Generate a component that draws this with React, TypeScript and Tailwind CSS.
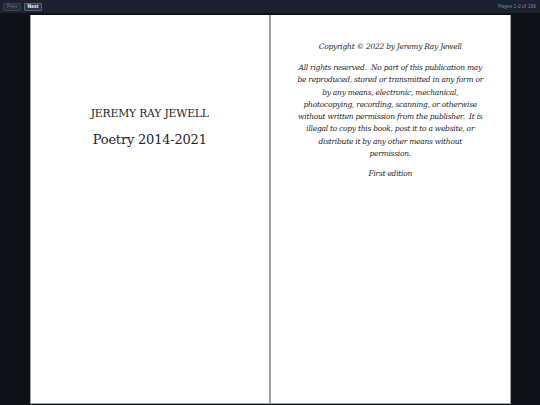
export default function App() {
  const serif = { fontFamily: '"DejaVu Serif", "Liberation Serif", serif' };
  const lines = [
    "All rights reserved.\u00a0 No part of this publication may",
    "be reproduced, stored or transmitted in any form or",
    "by any means, electronic, mechanical,",
    "photocopying, recording, scanning, or otherwise",
    "without written permission from the publisher.\u00a0 It is",
    "illegal to copy this book, post it to a website, or",
    "distribute it by any other means without",
    "permission.",
  ];
  return (
    <div className="w-[540px] h-[405px] bg-[#0e1117] flex flex-col overflow-hidden">
      <div className="h-[13px] bg-[#1c2130] flex items-center justify-between px-[3px] shrink-0" style={{ fontFamily: '"Liberation Sans", Arial, sans-serif' }}>
        <div className="flex gap-[3px]">
          <button className="h-[8px] w-[18px] flex items-center justify-center bg-[#262c3c] border border-[#3a4152] rounded-[1px] text-[5px] leading-none text-[#6b7386]">Prev</button>
          <button className="h-[8px] w-[18px] flex items-center justify-center bg-[#2a3246] border border-[#5b6580] rounded-[1px] text-[5px] leading-none font-bold text-white">Next</button>
        </div>
        <div className="text-[5px] leading-none text-[#7d8596] pr-[1px]">Pages 1-2 of 190</div>
      </div>
      <div className="flex-1 flex justify-center pt-[2px]">
        <div className="w-[481px] h-[389px] flex border border-[#9a9ea6] border-t-0 bg-white">
          <div className="flex-1 bg-white flex flex-col items-center pt-[92px] text-[#262626]" style={serif}>
            <div className="text-[10.8px] leading-[14px] tracking-[-0.2px]">JEREMY RAY JEWELL</div>
            <div className="text-[13px] leading-[18px] mt-[10px] tracking-[-0.2px]">Poetry 2014-2021</div>
          </div>
          <div className="w-[2px] bg-[#9ea2a8]" />
          <div className="flex-1 bg-white flex flex-col items-center pt-[26px] text-[#262626] italic text-center tracking-[-0.25px]" style={serif}>
            <div className="text-[7.5px] leading-[12px]">Copyright © 2022 by Jeremy Ray Jewell</div>
            <div className="text-[7.5px] leading-[12.3px] mt-[9px] flex flex-col items-center">
              {lines.map((l) => (
                <div key={l} className="whitespace-nowrap">{l}</div>
              ))}
            </div>
            <div className="text-[7.5px] leading-[12px] mt-[8px]">First edition</div>
          </div>
        </div>
      </div>
    </div>
  );
}
